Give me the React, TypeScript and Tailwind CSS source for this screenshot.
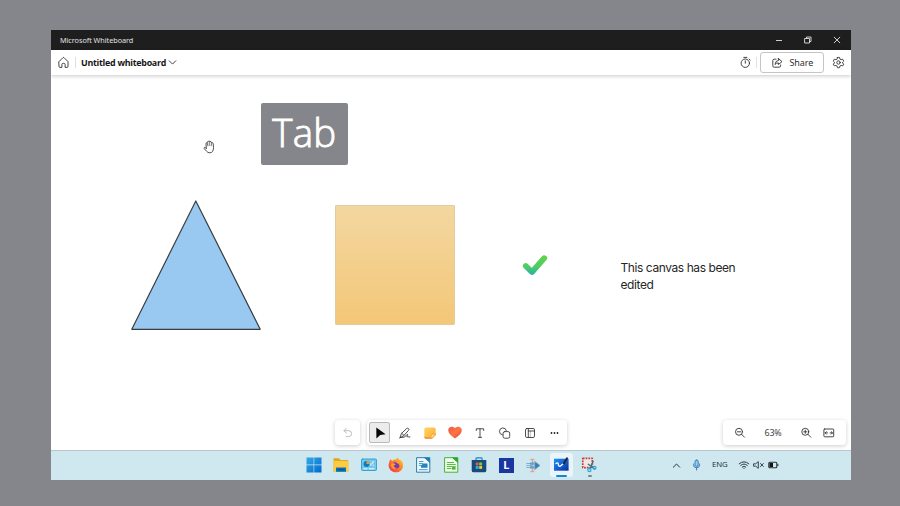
import type { ReactNode } from "react";

function Icon({ w = 12, h = 12, children, className = "" }: { w?: number; h?: number; children: ReactNode; className?: string }) {
  return (
    <svg width={w} height={h} viewBox={`0 0 ${w} ${h}`} fill="none" stroke="currentColor" strokeWidth={0.9} strokeLinecap="round" strokeLinejoin="round" className={`shrink-0 ${className}`}>
      {children}
    </svg>
  );
}

function TitleBar() {
  return (
    <div className="flex h-5 shrink-0 items-center bg-[#1e1e1e] pl-[9px] text-[#e2e2e2]">
      <span className="text-[7.25px] leading-5 tracking-[-0.04px]">Microsoft Whiteboard</span>
      <div className="ml-auto flex items-center">
        <div className="flex w-[29px] justify-center">
          <Icon w={8} h={8}><path d="M1 4.5H7" strokeLinecap="butt" /></Icon>
        </div>
        <div className="flex w-[29px] justify-center">
          <Icon w={8} h={8}>
            <path d="M1 2.5H5.5V7H1Z" />
            <path d="M2.5 2.2V1H7V5.5H5.8" />
          </Icon>
        </div>
        <div className="flex w-[29px] justify-center">
          <Icon w={8} h={8}><path d="M1.2 1.2L6.8 6.8M6.8 1.2L1.2 6.8" /></Icon>
        </div>
      </div>
    </div>
  );
}

function Header() {
  return (
    <div className="relative z-10 flex h-[25px] shrink-0 items-center bg-white pl-[6px] pr-[6px] text-[#303030] shadow-[0_1px_4px_rgba(0,0,0,0.22)]">
      <Icon w={13} h={13}>
        <path d="M2 5.6L6 1.6Q6.5 1.2 7 1.6L11 5.6V10.6Q11 11.4 10.2 11.4H8.1V8.4Q8.1 7.3 6.5 7.3Q4.9 7.3 4.9 8.4V11.4H2.8Q2 11.4 2 10.6Z" />
      </Icon>
      <div className="ml-[5px] h-[11px] w-px bg-[#dfdfdf]" />
      <span className="ml-[5px] w-[84px] whitespace-nowrap pt-px font-['Open_Sans','Noto_Sans',sans-serif] text-[8.9px] font-bold leading-[24px] tracking-[-0.27px] text-[#151515]">Untitled whiteboard</span>
      <Icon w={9} h={7} className="ml-[3px]"><path d="M1.2 1.8L4.5 5.1L7.8 1.8" /></Icon>
      <div className="ml-auto flex items-center">
        <Icon w={13} h={13}>
          <circle cx="6.3" cy="7.2" r="4.2" />
          <path d="M6.3 7.2V4.8M4.8 1.4H7.8M10 3L11.2 4.1" />
        </Icon>
        <div className="ml-[4px] h-[11px] w-px bg-[#e2e2e2]" />
        <button className="ml-[3px] flex h-[21px] w-[64px] items-center rounded-[3px] border border-[#c5c5c5] bg-white pl-[10px]">
          <Icon w={13} h={12}>
            <path d="M5 2.2H3.2Q1.8 2.2 1.8 3.6V8.8Q1.8 10.2 3.2 10.2H8.2Q9.6 10.2 9.6 8.8V8" />
            <path d="M7.4 1.5L11 4.6L7.4 7.5V5.9Q5.3 5.8 4 7.5Q4.3 3.7 7.4 3.3Z" />
          </Icon>
          <span className="ml-[5.5px] text-[9px] leading-none tracking-[-0.1px]">Share</span>
        </button>
        <Icon w={13} h={13} className="ml-[8px]">
          <path d="M5.4 1.5Q6.5 1.2 7.6 1.5L7.9 3L9.1 3.7L10.6 3.2Q11.4 4.1 11.7 5.1L10.6 6.1V7L11.7 8.1Q11.4 9.1 10.6 9.9L9.1 9.4L7.9 10.1L7.6 11.6Q6.5 11.9 5.4 11.6L5.1 10.1L3.9 9.4L2.4 9.9Q1.6 9.1 1.3 8.1L2.4 7V6.1L1.3 5.1Q1.6 4.1 2.4 3.2L3.9 3.7L5.1 3Z" />
          <circle cx="6.5" cy="6.5" r="1.7" />
        </Icon>
      </div>
    </div>
  );
}

function Cell({ children }: { children: ReactNode }) {
  return <div className="flex h-[25px] w-[25px] shrink-0 items-center justify-center">{children}</div>;
}

function Toolbar() {
  return (
    <div className="absolute left-[284px] top-[345px] flex gap-[7px] text-[#3b3b3b]">
      <div className="flex h-[25px] w-[25px] items-center justify-center rounded-[4px] bg-white text-[#b4b4b4] shadow-[0_1px_4px_rgba(0,0,0,0.2)]">
        <Icon>
          <path d="M4.2 1.3L2 3.7L4.3 6.1M2.2 3.7H6.7Q9.6 3.7 9.6 6.5Q9.6 9.6 6.7 9.6H4.2" />
        </Icon>
      </div>
      <div className="flex h-[25px] w-[200px] items-center rounded-[4px] bg-white shadow-[0_1px_4px_rgba(0,0,0,0.2)]">
        <div className="ml-[2px] flex h-[21px] w-[21px] shrink-0 items-center justify-center rounded-[2px] border border-[#b9b9b9] bg-[#ececec]">
          <Icon w={12} h={12}><path d="M2.3 .6L11.6 7.2L6.2 7.9L2.4 11.4Z" fill="#050505" stroke="none" /></Icon>
        </div>
        <div className="flex pl-[2px]">
          <Cell>
            <Icon w={12} h={12}>
              <path d="M1 10.8L2.4 6.5L7.7 1.5Q8.7 .8 9.6 1.7Q10.3 2.6 9.4 3.5L4.6 8.8L1 10.8Z" />
              <path d="M2.8 6.4L5 8.4M1.5 10.5L5.5 10.1L8 7.5Q9 6.9 8.4 8.2Q7.2 10.3 8.6 9.7Q9.5 9 9.4 9.8Q9.4 10.5 10.9 10" />
            </Icon>
          </Cell>
          <Cell>
            <Icon w={12} h={12}>
              <defs><linearGradient id="note" x1="0" y1="0" x2="1" y2="1"><stop stopColor="#ffd75a" /><stop offset=".7" stopColor="#ffb647" /><stop offset="1" stopColor="#f48b37" /></linearGradient></defs>
              <path d="M2 .4H10Q11.7.4 11.7 2V8L8 11.7H2Q.3 11.7.3 10V2Q.3.4 2 .4Z" fill="url(#note)" stroke="none" />
              <path d="M.3 9.8V10Q.3 11.7 2 11.7H7.3V10.6Z" fill="#f59248" stroke="none" />
              <path d="M11.7 7.2H8.8Q7.1 7.2 7.1 9V11.7Z" fill="#ffe176" stroke="#e99a2b" strokeWidth={0.6} />
            </Icon>
          </Cell>
          <Cell>
            <Icon w={14} h={13}>
              <defs><linearGradient id="heart" x1="0" y1="0" x2="1" y2="1"><stop stopColor="#ef5548" /><stop offset=".5" stopColor="#fd7540" /><stop offset="1" stopColor="#e74443" /></linearGradient></defs>
              <path d="M7 12.6C4.5 11.1.2 7.7.2 4.1C.2.5 4.8-.5 7 2.2C9.2-.5 13.8.5 13.8 4.1C13.8 7.7 9.5 11.1 7 12.6Z" fill="url(#heart)" stroke="none" />
            </Icon>
          </Cell>
          <Cell>
            <Icon><path d="M2.3 3.5V1.8H9.7V3.5M6 1.8V10.4M4.5 10.4H7.5" /></Icon>
          </Cell>
          <Cell>
            <Icon w={13} h={12}>
              <path d="M4.4 7.9A3.5 3.5 0 1 1 8.4 3.8" />
              <rect x="5.1" y="4.6" width="6.6" height="6.6" rx="1.6" />
            </Icon>
          </Cell>
          <Cell>
            <Icon w={12} h={12}>
              <rect x="1.5" y="1.5" width="9" height="9" rx="1.4" />
              <path d="M4.3 1.6V10.4M4.3 4H10.4" />
              <path d="M6.3 4V10.4" strokeWidth=".35" />
            </Icon>
          </Cell>
          <Cell>
            <Icon w={11} h={4}>
              <g fill="#202020" stroke="none"><circle cx="2.5" cy="2" r=".9" /><circle cx="5.5" cy="2" r=".9" /><circle cx="8.5" cy="2" r=".9" /></g>
            </Icon>
          </Cell>
        </div>
      </div>
    </div>
  );
}

function ZoomControls() {
  return (
    <div className="absolute left-[672px] top-[345px] flex h-[25px] w-[123px] items-center rounded-[4px] bg-white pl-[11px] text-[#333] shadow-[0_1px_4px_rgba(0,0,0,0.2)]">
      <Icon>
        <circle cx="5" cy="4.8" r="3.5" /><path d="M3.4 4.8H6.6M7.6 7.3L10.5 10.2" />
      </Icon>
      <span className="ml-[14px] w-[26px] pt-px text-center text-[8.9px] leading-none tracking-[-0.15px] text-[#444]">63%</span>
      <Icon className="ml-[14px]">
        <circle cx="5.3" cy="4.8" r="3.5" /><path d="M3.7 4.8H6.9M5.3 3.2V6.4M7.9 7.3L10.8 10.2" />
      </Icon>
      <Icon className="ml-[11px]">
        <rect x=".9" y="2" width="9.8" height="7.8" rx=".8" />
        <path d="M2.2 5.9H4.5M3.3 4.7L2.1 5.9L3.3 7.1M9.4 5.9H7.1M8.3 4.7L9.5 5.9L8.3 7.1" />
      </Icon>
    </div>
  );
}

function Canvas() {
  return (
    <div className="relative h-[375px] shrink-0 bg-white">
      <svg width="130" height="132" viewBox="0 0 130 132" className="absolute left-[80px] top-[125px]">
        <path d="M64.8 .9L129.2 129.3H.8Z" fill="#99c8f0" stroke="#383e42" strokeWidth="1.2" strokeLinejoin="round" />
      </svg>
      <div className="absolute left-[284px] top-[130px] h-[120px] w-[120px] rounded-[1px] border border-[#e3cc9c] bg-gradient-to-b from-[#f3d7a0] to-[#f3c777]" />
      <svg width="26" height="22" viewBox="0 0 26 22" className="absolute left-[471px] top-[179px]">
        <defs>
          <linearGradient id="check" x1="0" y1="0" x2="0" y2="1"><stop stopColor="#5bd34f" /><stop offset=".65" stopColor="#4dcd65" /><stop offset="1" stopColor="#35b698" /></linearGradient>
        </defs>
        <path d="M3.8 12L10 18L22.2 4.2" fill="none" stroke="url(#check)" strokeWidth="5.8" strokeLinecap="round" strokeLinejoin="round" />
      </svg>
      <p className="absolute left-[569.5px] top-[185px] w-[130px] font-[Inter,sans-serif] text-[12px] leading-[16.5px] tracking-[-0.42px] text-[#262626]">
        This canvas has been<br />edited
      </p>
      <svg width="13" height="14" viewBox="0 0 13 14" className="absolute left-[152px] top-[65px]" fill="#fff" stroke="#3a3a3a" strokeWidth=".9" strokeLinejoin="round" strokeLinecap="round">
        <path d="M3.3 8.4L3 3.8Q3 2.6 4.1 2.7Q4.2 1.4 5.4 1.4Q6.3 .9 7 1.5Q8.3 1.3 8.6 2.5Q9.9 2.3 10.2 3.7L10.5 7.5Q10.4 12.8 6.8 12.8Q4.7 12.8 3.6 11.2L1.2 8.6Q.8 7.6 1.6 7.4Q2.4 7.2 3.3 8.4Z" />
        <path d="M4.3 3L4.8 5.8M6.3 2V5.5M8.4 2.8L8.2 5.8" strokeWidth=".7" />
      </svg>
      <div className="absolute left-[209.5px] top-[28px] flex h-[62px] w-[87.5px] items-center justify-center rounded-[2px] bg-[#85868b] pb-[4px] font-['Open_Sans',sans-serif] text-[38.5px] font-light leading-none tracking-[0.1px] text-white [-webkit-text-stroke:0.9px_white]">
        Tab
      </div>
      <Toolbar />
      <ZoomControls />
    </div>
  );
}

function AppSlot({ children }: { children: ReactNode }) {
  return <div className="flex w-[27.55px] shrink-0 items-center justify-center">{children}</div>;
}

function TaskBar() {
  return (
    <div className="relative flex h-[30px] shrink-0 items-center border-t border-[#b7c7cc] bg-[#cfe7ef] pb-px pl-[248.8px] text-[#273238]">
      <AppSlot>
        <Icon w={16} h={16}>
          <defs><linearGradient id="win" x1="0" y1="0" x2="1" y2="1"><stop stopColor="#36a9e8" /><stop offset="1" stopColor="#006bcc" /></linearGradient></defs>
          <path d="M.5.5H7.6V7.6H.5ZM8.2.5H15.5V7.6H8.2ZM.5 8.2H7.6V15.5H.5ZM8.2 8.2H15.5V15.5H8.2Z" fill="url(#win)" stroke="none" />
        </Icon>
      </AppSlot>
      <AppSlot>
        <Icon w={16} h={16}>
          <path d="M1 1.2H6L7.5 3H14Q15.3 3 15.3 4.2V14.5H.5V2Q.5 1.2 1 1.2Z" fill="#e5a51c" stroke="none" />
          <path d="M.5 4H14.5Q15.3 4 15.3 5V14.5H.5Z" fill="#fccb45" stroke="none" />
          <path d="M3 10.5H13V14.8H3Z" fill="#0872b8" stroke="none" /><path d="M5 12.7H11" stroke="#034c87" />
        </Icon>
      </AppSlot>
      <AppSlot>
        <Icon w={16} h={14}>
          <rect x=".5" y="1" width="15" height="11.5" rx="1" fill="#73c9ec" stroke="#349bc8" />
          <circle cx="5.5" cy="6" r="3" fill="#087dc1" stroke="none" /><path d="M5.5 6V3A3 3 0 0 1 8.5 6Z" fill="#ed9b3d" stroke="none" />
          <path d="M10 7.6V5.5M12 7.6V3.5M3 10.7H6M8.2 10.7H13" stroke="#effaff" strokeWidth="1.1" />
          <path d="M9.8 8.6L13 5.4" stroke="#347f9f" strokeWidth=".5" />
        </Icon>
      </AppSlot>
      <AppSlot>
        <Icon w={16} h={16}>
          <defs><linearGradient id="fox" x1="1" y1="0" x2="0" y2="1"><stop stopColor="#ffdc30" /><stop offset=".45" stopColor="#ff8128" /><stop offset="1" stopColor="#eb2b5a" /></linearGradient></defs>
          <path d="M2.6 2.1L4.2 4Q5.7 2.4 8 2.6L9.5.5L11.7 3L13.3 3.4Q15.6 6 15.1 9.2C14.5 12.9 11.6 15.3 8 15.3C3.6 15.3.5 12.1.6 8Q.8 4.9 2.6 2.1Z" fill="url(#fox)" stroke="none" />
          <circle cx="8.1" cy="8.3" r="3.3" fill="#743bb3" stroke="none" />
          <path d="M3.1 6.8Q5.5 5.6 7.6 7Q7.6 8.3 5.7 8.5Q5.8 10.8 8.6 10.8Q7 13 4.2 11Q2.6 9.3 3.1 6.8ZM8.3 3.6Q12.5 4.7 11.7 8.9Q10.9 6.1 8.3 5.9Z" fill="#ff9d26" stroke="none" />
        </Icon>
      </AppSlot>
      <AppSlot>
        <Icon w={15} h={16}>
          <path d="M1 .7H9L13.8 5V15.2H1Z" fill="#eff9ff" stroke="#307bad" strokeWidth="1" />
          <path d="M9 .7H13.8V5Z" fill="#167bb9" stroke="#167bb9" />
          <path d="M3.3 4.5H7M3.3 6.5H6.5M3.3 8.4H6M3.3 12.7H11.3" stroke="#2a84bb" strokeWidth=".8" />
          <path d="M7 6.5H11.5V10.8H5V8.8Z" fill="#2284bf" stroke="none" />
        </Icon>
      </AppSlot>
      <AppSlot>
        <Icon w={15} h={16}>
          <path d="M1 .7H9L13.8 5V15.2H1Z" fill="#effced" stroke="#43b42b" strokeWidth="1" />
          <path d="M9 .7H13.8V5Z" fill="#29a628" stroke="#29a628" />
          <path d="M3.3 5.5H9.5M3.3 7.5H11.3M3.3 9.5H8M3.3 11.5H7" stroke="#58bd40" strokeWidth="1.1" />
          <path d="M8 9H11.8V12.7H8Z" fill="#79cd65" stroke="none" />
          <path d="M8.8 12V10.7M10 12V9.8" stroke="#268e23" strokeWidth=".7" />
        </Icon>
      </AppSlot>
      <AppSlot>
        <Icon w={16} h={16}>
          <path d="M5 4V1.5Q5 .8 6 .8H10Q11 .8 11 1.5V4" stroke="#1687c8" strokeWidth="1.2" />
          <path d="M.7 3H15.3V13.4Q15.3 15.3 13.4 15.3H2.6Q.7 15.3.7 13.4Z" fill="#164b7b" stroke="none" />
          <path d="M4.7 5.5H7.6V8.4H4.7Z" fill="#ef5936" stroke="none" /><path d="M8.2 5.5H11.1V8.4H8.2Z" fill="#8cc640" stroke="none" />
          <path d="M4.7 9H7.6V11.9H4.7Z" fill="#28b1e6" stroke="none" /><path d="M8.2 9H11.1V11.9H8.2Z" fill="#fdc335" stroke="none" />
        </Icon>
      </AppSlot>
      <AppSlot>
        <div className="flex h-[15px] w-[15px] items-center justify-center bg-[#1a36a0] pb-px text-[11px] font-bold leading-none text-white">L</div>
      </AppSlot>
      <AppSlot>
        <Icon w={15} h={15}>
          <path d="M.8 5.5H4M.8 9.5H4M.8 7.5H6" stroke="#79add2" strokeWidth="1.2" />
          <path d="M5 1.5H7.8M5 13.5H7.8M6.5 2V13" stroke="#e6a292" strokeWidth="1.4" />
          <path d="M9 3.7L14 7.5L9 11.3Z" fill="#397fac" stroke="#6aa4c6" />
          <path d="M4 4.5H8V6.7H4ZM4 8.3H8V10.5H4Z" fill="#5ba0cf" stroke="none" />
        </Icon>
      </AppSlot>
      <AppSlot>
        <div className="relative flex h-[24px] w-[23px] items-center justify-center rounded-[3px] bg-[#e9f5fa]">
          <Icon w={17} h={16}>
            <defs><linearGradient id="board" x1="0" y1="0" x2="1" y2="1"><stop stopColor="#1597ee" /><stop offset=".5" stopColor="#1762d5" /><stop offset="1" stopColor="#0a2d96" /></linearGradient></defs>
            <path d="M1 1.7H15.6V13.7H1Z" fill="url(#board)" stroke="none" />
            <path d="M3 6.5Q5 5 5.3 7Q5.5 9.8 7.2 9.2L10.3 6.8" stroke="#fff" strokeWidth="1.3" />
            <path d="M10.8 6.4L14 1.2" stroke="#182338" strokeWidth="1.9" />
          </Icon>
          <div className="absolute bottom-0 left-[6px] h-[2px] w-[11px] rounded-full bg-[#1686cf]" />
        </div>
      </AppSlot>
      <AppSlot>
        <div className="relative flex h-[24px] w-[23px] items-center justify-center">
          <Icon w={16} h={16}>
            <rect x="1.8" y="1.4" width="9.5" height="9.2" fill="#eee9e8" stroke="#c94235" strokeWidth="1.7" strokeDasharray="1.8 1" strokeLinecap="butt" />
            <path d="M12.1 4.5L8.5 11.7M7.3 7.3L13.2 11.5" stroke="#4b6c79" strokeWidth="1.4" />
            <circle cx="8.4" cy="13" r="1.6" stroke="#28a9d8" strokeWidth="1.2" /><circle cx="13.5" cy="10.8" r="1.5" stroke="#28a9d8" strokeWidth="1.2" />
          </Icon>
          <div className="absolute bottom-0 left-[10px] h-[2px] w-[4px] rounded-full bg-[#778991]" />
        </div>
      </AppSlot>
      <div className="ml-auto flex items-center pr-[72px]">
        <Icon w={9} h={7}><path d="M1.3 5.2L4.5 2L7.7 5.2" strokeWidth="1" /></Icon>
        <Icon w={9} h={12} className="ml-[11px] text-[#2873b8]">
          <rect x="3" y="1" width="3.2" height="6.4" rx="1.6" fill="#a0caea" />
          <path d="M1.5 5V5.7Q1.5 8.8 4.6 8.8Q7.6 8.8 7.6 5.7V5M4.6 8.8V11" />
        </Icon>
        <span className="ml-[11px] w-[16px] whitespace-nowrap text-[7.8px] leading-none tracking-[-0.15px]">ENG</span>
        <Icon w={12} h={10} className="ml-[10px]">
          <path d="M1.2 3.8Q6 -.4 10.8 3.8M2.7 5.4Q6 2.5 9.3 5.4M4.2 7Q6 5.6 7.8 7M6 8.4V8.5" strokeWidth=".95" />
        </Icon>
        <Icon w={12} h={10} className="ml-[3px]">
          <path d="M1 3.8H2.7L5.3 1.6V8.4L2.7 6.2H1ZM7.5 3.5L10.3 6.5M10.3 3.5L7.5 6.5" />
        </Icon>
        <Icon w={11} h={8} className="ml-[3px]">
          <rect x=".8" y="1.3" width="8" height="5.4" rx="1" strokeWidth="1.1" />
          <path d="M1.5 2H5V6H1.5Z" fill="#111" stroke="none" /><path d="M9.9 3.3V4.7" strokeWidth="1" />
        </Icon>
      </div>
    </div>
  );
}

export default function App() {
  return (
    <main className="h-[506px] w-[900px] overflow-hidden bg-[#85868b] pl-[51px] pt-[30px] font-['Noto_Sans',sans-serif]">
      <div className="flex h-[450px] w-[800px] flex-col overflow-hidden">
        <TitleBar />
        <Header />
        <Canvas />
        <TaskBar />
      </div>
    </main>
  );
}
